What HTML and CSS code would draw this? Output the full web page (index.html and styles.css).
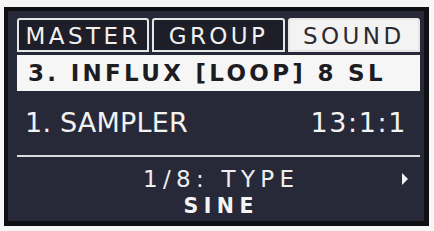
FILE: index.html
```html
<!DOCTYPE html>
<html>
<head>
<meta charset="utf-8">
<link rel="stylesheet" href="styles.css">
</head>
<body>
<div class="panel">
  <div class="tabs">
    <div class="tab dark">MASTER</div>
    <div class="tab dark">GROUP</div>
    <div class="tab active">SOUND</div>
  </div>
  <div class="titlebar">3. INFLUX [LOOP] 8 SL</div>
  <div class="row">
    <span class="name">1. SAMPLER</span>
    <span class="pos">13:1:1</span>
  </div>
  <div class="divider"></div>
  <div class="param">
    <span class="spacer"></span>
    <span class="label">1/8: TYPE</span>
    <span class="arrow"></span>
  </div>
  <div class="value">SINE</div>
</div>
</body>
</html>
```
FILE: styles.css
```css
* { box-sizing: border-box; }
html, body { margin: 0; padding: 0; }
body {
  background: #f6f6f6;
  width: 434px;
  height: 231px;
  overflow: hidden;
  font-family: "DejaVu Sans", sans-serif;
}
.panel {
  margin: 7px 0 0 4px;
  width: 425px;
  height: 219px;
  background: #282938;
  border-style: solid;
  border-color: #101014;
  border-width: 4px 5px 5px 4px;
  padding: 7px 4px 0 9px;
  display: flex;
  flex-direction: column;
}
.tabs {
  display: grid;
  grid-template-columns: 1fr 1fr 1fr;
  gap: 3px;
  height: 34px;
}
.tab {
  border: 2px solid #e6e6e6;
  border-radius: 3px 3px 0 0;
  font-size: 23px;
  line-height: 28px;
  padding-top: 2px;
  text-align: center;
  letter-spacing: 3.4px;
  white-space: nowrap;
  overflow: hidden;
}
.tab.dark {
  background: #1d1e28;
  color: #f0f0f0;
}
.tab.active {
  background: #f3f3f3;
  color: #2a2a30;
}
.titlebar {
  margin-top: 3px;
  height: 36px;
  background: #f6f6f6;
  color: #1c1c22;
  font-weight: bold;
  font-size: 23px;
  line-height: 36px;
  letter-spacing: 3.3px;
  padding-left: 11px;
  white-space: nowrap;
  overflow: hidden;
}
.row {
  height: 64px;
  display: flex;
  justify-content: space-between;
  align-items: center;
  padding: 0 13px 0 8px;
  color: #f2f2f2;
  font-size: 27px;
  line-height: 64px;
  font-weight: normal;
}
.row .name { letter-spacing: 0.2px; }
.row .pos { letter-spacing: 1.6px; }
.divider {
  height: 2px;
  background: #dcdcdc;
}
.param {
  margin-top: 10px;
  display: grid;
  grid-template-columns: 1fr auto 1fr;
  align-items: center;
  height: 24px;
  color: #eeeeee;
  font-size: 23px;
  line-height: 24px;
}
.param .label {
  letter-spacing: 5.3px;
  margin-right: -5.3px;
  white-space: nowrap;
}
.param .arrow {
  justify-self: end;
  margin-right: 12px;
  width: 0;
  height: 0;
  border-top: 6px solid transparent;
  border-bottom: 6px solid transparent;
  border-left: 6px solid #f2f2f2;
}
.value {
  margin-top: 4px;
  text-align: center;
  color: #f4f4f4;
  font-weight: bold;
  font-size: 20.5px;
  line-height: 22px;
  letter-spacing: 5.5px;
  margin-right: -5.5px;
}
```
